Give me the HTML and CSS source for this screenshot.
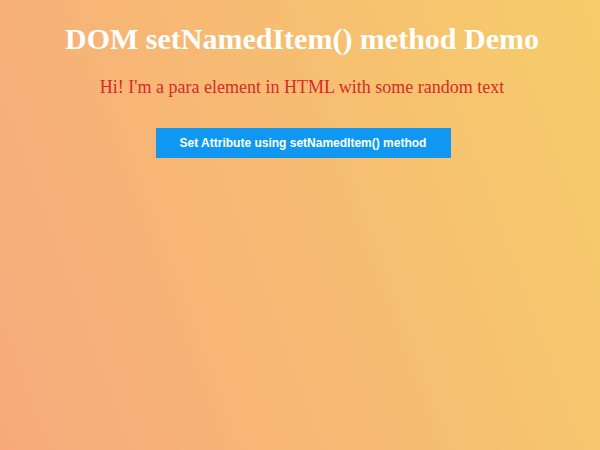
FILE: index.html
```html
<!DOCTYPE html>
<html lang="en">
<head>
    <meta charset="UTF-8">
    <title>DOM setNamedItem() method Demo</title>
    <link rel="stylesheet" href="styles.css">
</head>
<body>
    <h1 class="title">DOM setNamedItem() method Demo</h1>
    <p class="para" id="para">Hi! I'm a para element in HTML with some random text</p>
    <button class="btn" type="button">Set Attribute using setNamedItem() method</button>
</body>
</html>
```

FILE: styles.css
```css
html {
    height: 100%;
}
body {
    margin: 0;
    padding: 0 6px 0 10px;
    min-height: 100%;
    text-align: center;
    font-family: "Liberation Serif", serif;
    background-image: linear-gradient(70deg, #f7a97c, #f6cd6a);
}
.title {
    margin: 0;
    padding-top: 22px;
    font-size: 30px;
    color: #ffffff;
}
.para {
    margin: 21px 0 0;
    font-size: 18px;
    color: #d62b2b;
}
.btn {
    margin: 30px 0 0 2px;
    width: 295px;
    height: 30px;
    border: none;
    background-color: #0f97f2;
    color: #ffffff;
    font-family: "Liberation Sans", sans-serif;
    font-weight: bold;
    font-size: 12px;
}
```
